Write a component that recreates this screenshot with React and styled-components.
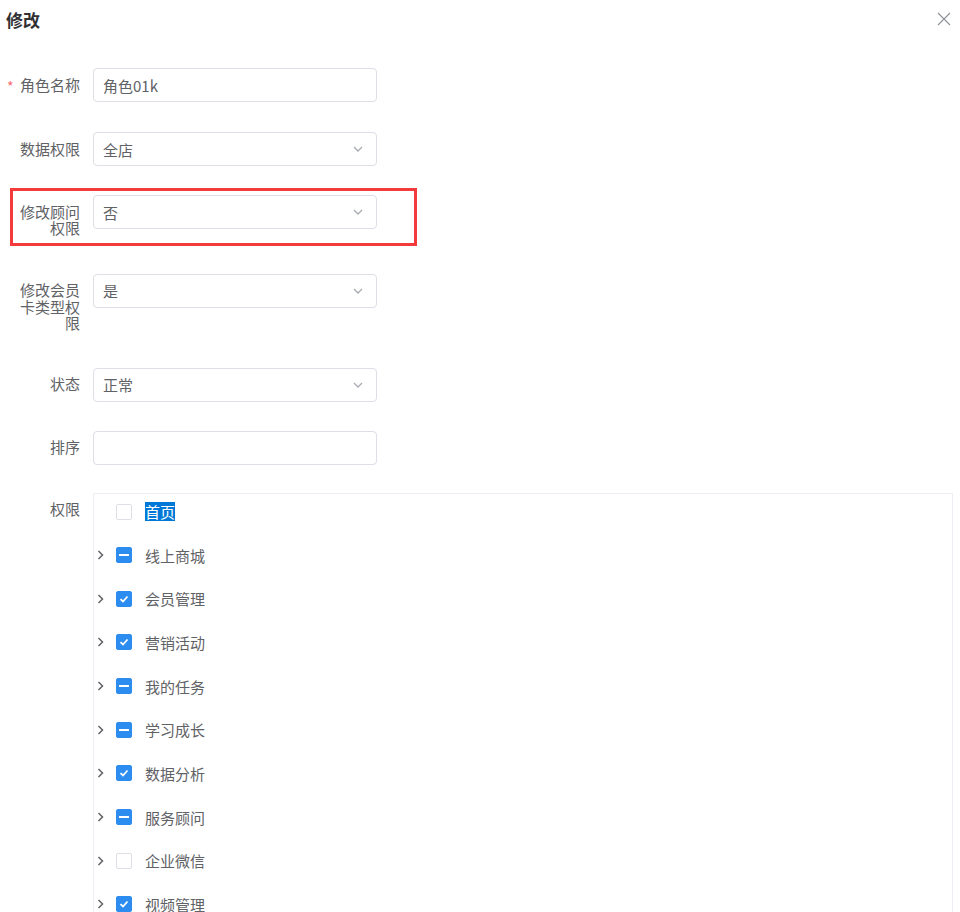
import React from "react";
import styled, { createGlobalStyle } from "styled-components";

const Global = createGlobalStyle`
  html, body { margin: 0; padding: 0; background: #fff; }
  body { font-family: "Noto Sans CJK SC", "Noto Sans", sans-serif; color: #606266; overflow: hidden; }
  * { box-sizing: border-box; }
`;

const Page = styled.div`
  width: 960px;
  height: 912px;
  overflow: hidden;
  position: relative;
`;

const Header = styled.div`
  height: 40px;
  display: flex;
  align-items: center;
  justify-content: space-between;
  padding: 0 8px 0 6px;
`;

const Title = styled.div`
  font-size: 17px;
  font-weight: 700;
  color: #303133;
  line-height: 20px;
`;

const Close = styled.button`
  border: none;
  background: none;
  padding: 0;
  width: 16px;
  height: 16px;
  display: flex;
  align-items: center;
  justify-content: center;
  margin-top: -2px;
`;

const Form = styled.div`
  margin-top: 28px;
  display: flex;
  flex-direction: column;
`;

const Item = styled.div`
  position: relative;
  display: flex;
  align-items: flex-start;
  margin-bottom: ${(p) => p.$mb ?? 29}px;
`;

const Label = styled.label`
  position: relative;
  width: 80px;
  flex: 0 0 80px;
  padding: 8.5px 0 7.5px 18px;
  margin-right: 13px;
  font-size: 15px;
  line-height: 16.5px;
  text-align: right;
  color: #606266;
  word-break: break-all;
`;

const Star = styled.span`
  position: absolute;
  left: 7px;
  top: 11px;
  color: #f56c6c;
  font-size: 14px;
  line-height: 14px;
`;

const Field = styled.div`
  width: 284px;
  height: 34px;
  border: 1px solid #dcdfe6;
  border-radius: 4px;
  display: flex;
  align-items: center;
  justify-content: space-between;
  padding: 0 13px 0 9px;
  font-size: 15px;
  color: #606266;
  background: #fff;
`;

const Highlight = styled.div`
  position: absolute;
  left: 10px;
  top: -7px;
  width: 407px;
  height: 58px;
  border: 3px solid #f43b3b;
  pointer-events: none;
`;

const TreeBox = styled.div`
  flex: 1;
  margin-right: 7px;
  border: 1px solid #ebeef5;
  border-bottom: none;
  height: 440px;
`;

const Node = styled.div`
  height: 36px;
  margin-bottom: 7.67px;
  display: flex;
  align-items: center;
  padding-left: 0;
  font-size: 15px;
  color: #606266;
`;

const Caret = styled.span`
  width: 12px;
  height: 12px;
  display: flex;
  align-items: center;
  justify-content: center;
  margin-right: 10px;
  visibility: ${(p) => (p.$hidden ? "hidden" : "visible")};
`;

const Box = styled.span`
  width: 16px;
  height: 16px;
  border-radius: 2px;
  border: 1px solid ${(p) => (p.$state === "none" ? "#dcdfe6" : "#2d8cf0")};
  background: ${(p) => (p.$state === "none" ? "#fff" : "#2d8cf0")};
  display: flex;
  align-items: center;
  justify-content: center;
  margin-right: 13px;
`;

const NodeText = styled.span`
  line-height: 19px;
  background: ${(p) => (p.$selected ? "#0078d7" : "transparent")};
  color: ${(p) => (p.$selected ? "#fff" : "#606266")};
`;

const ChevronDown = () => (
  <svg width="10" height="6" viewBox="0 0 10 6">
    <polyline points="1,1 5,5 9,1" fill="none" stroke="#a8abb2" strokeWidth="1.3" />
  </svg>
);

const ChevronRight = () => (
  <svg width="7" height="10" viewBox="0 0 7 10">
    <polyline points="1.5,1 5.5,5 1.5,9" fill="none" stroke="#606266" strokeWidth="1.5" />
  </svg>
);

const Mark = ({ state }) =>
  state === "all" ? (
    <svg width="10" height="8" viewBox="0 0 10 8">
      <polyline points="1.5,4.2 4,6.5 8.5,1.5" fill="none" stroke="#fff" strokeWidth="1.8" />
    </svg>
  ) : state === "half" ? (
    <svg width="10" height="4" viewBox="0 0 10 4">
      <rect x="0" y="1" width="10" height="2" fill="#fff" />
    </svg>
  ) : null;

const nodes = [
  { t: "首页", s: "none", leaf: true, sel: true },
  { t: "线上商城", s: "half" },
  { t: "会员管理", s: "all" },
  { t: "营销活动", s: "all" },
  { t: "我的任务", s: "half" },
  { t: "学习成长", s: "half" },
  { t: "数据分析", s: "all" },
  { t: "服务顾问", s: "half" },
  { t: "企业微信", s: "none" },
  { t: "视频管理", s: "all" },
];

export default function App() {
  return (
    <Page>
      <Global />
      <Header>
        <Title>修改</Title>
        <Close aria-label="close">
          <svg width="14" height="14" viewBox="0 0 14 14">
            <path d="M1 1L13 13M13 1L1 13" stroke="#909399" strokeWidth="1.2" fill="none" />
          </svg>
        </Close>
      </Header>
      <Form>
        <Item $mb={30}>
          <Label>
            <Star>*</Star>角色名称
          </Label>
          <Field>角色01k</Field>
        </Item>
        <Item $mb={29}>
          <Label>数据权限</Label>
          <Field>
            全店
            <ChevronDown />
          </Field>
        </Item>
        <Item $mb={29.5}>
          <Highlight />
          <Label>修改顾问权限</Label>
          <Field>
            否
            <ChevronDown />
          </Field>
        </Item>
        <Item $mb={28.5}>
          <Label>修改会员卡类型权限</Label>
          <Field>
            是
            <ChevronDown />
          </Field>
        </Item>
        <Item $mb={29}>
          <Label>状态</Label>
          <Field>
            正常
            <ChevronDown />
          </Field>
        </Item>
        <Item $mb={28}>
          <Label>排序</Label>
          <Field />
        </Item>
        <Item $mb={0}>
          <Label>权限</Label>
          <TreeBox>
            {nodes.map((n) => (
              <Node key={n.t}>
                <Caret $hidden={n.leaf}>
                  <ChevronRight />
                </Caret>
                <Box $state={n.s}>
                  <Mark state={n.s} />
                </Box>
                <NodeText $selected={n.sel}>{n.t}</NodeText>
              </Node>
            ))}
          </TreeBox>
        </Item>
      </Form>
    </Page>
  );
}
